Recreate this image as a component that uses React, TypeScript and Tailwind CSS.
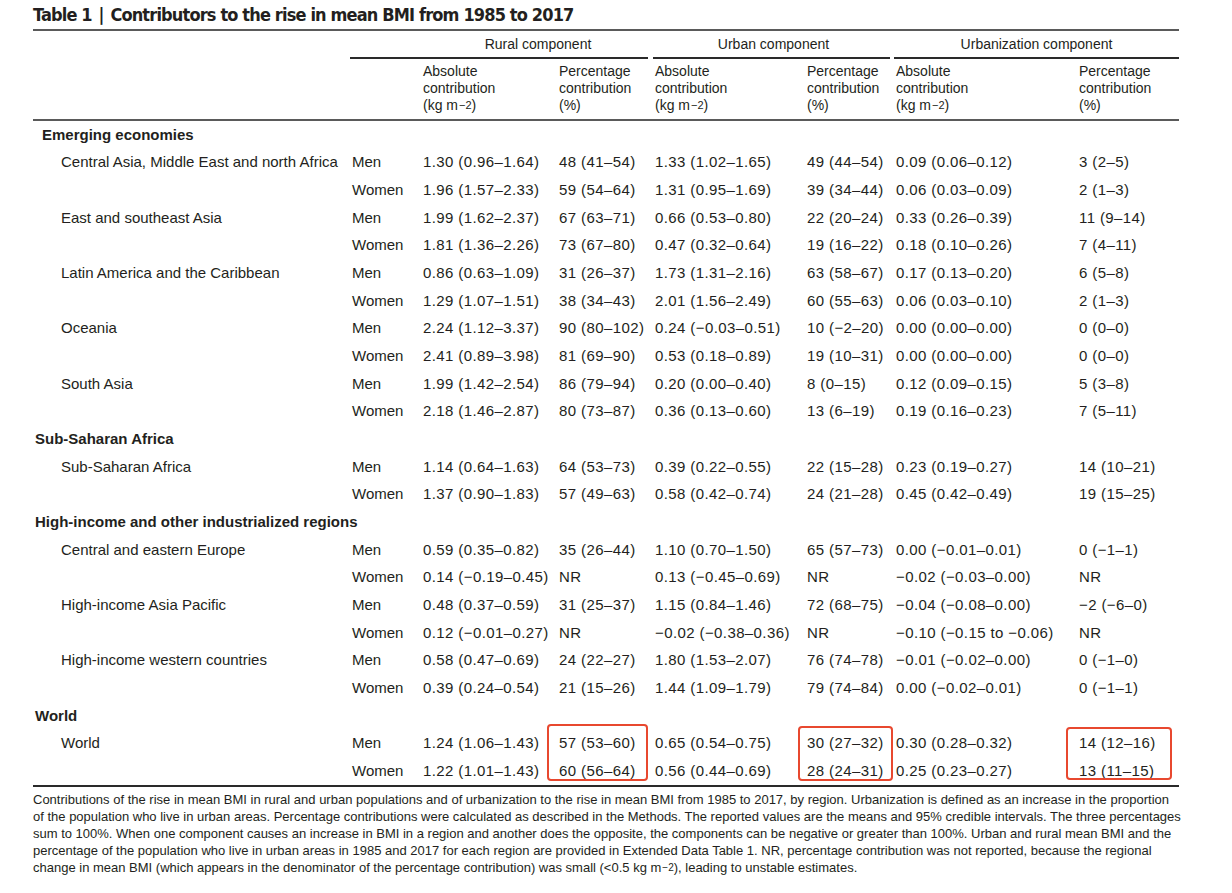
import React from 'react'

type Row = [string, string, string, string, string, string, string]

type Region = { name: string; rows: Row[] }

type Section = { title: string; indent: string; regions: Region[] }

const sections: Section[] = [
  {
    title: 'Emerging economies',
    indent: 'pl-[9px]',
    regions: [
      {
        name: 'Central Asia, Middle East and north Africa',
        rows: [
          ['Men', '1.30 (0.96–1.64)', '48 (41–54)', '1.33 (1.02–1.65)', '49 (44–54)', '0.09 (0.06–0.12)', '3 (2–5)'],
          ['Women', '1.96 (1.57–2.33)', '59 (54–64)', '1.31 (0.95–1.69)', '39 (34–44)', '0.06 (0.03–0.09)', '2 (1–3)'],
        ],
      },
      {
        name: 'East and southeast Asia',
        rows: [
          ['Men', '1.99 (1.62–2.37)', '67 (63–71)', '0.66 (0.53–0.80)', '22 (20–24)', '0.33 (0.26–0.39)', '11 (9–14)'],
          ['Women', '1.81 (1.36–2.26)', '73 (67–80)', '0.47 (0.32–0.64)', '19 (16–22)', '0.18 (0.10–0.26)', '7 (4–11)'],
        ],
      },
      {
        name: 'Latin America and the Caribbean',
        rows: [
          ['Men', '0.86 (0.63–1.09)', '31 (26–37)', '1.73 (1.31–2.16)', '63 (58–67)', '0.17 (0.13–0.20)', '6 (5–8)'],
          ['Women', '1.29 (1.07–1.51)', '38 (34–43)', '2.01 (1.56–2.49)', '60 (55–63)', '0.06 (0.03–0.10)', '2 (1–3)'],
        ],
      },
      {
        name: 'Oceania',
        rows: [
          ['Men', '2.24 (1.12–3.37)', '90 (80–102)', '0.24 (−0.03–0.51)', '10 (−2–20)', '0.00 (0.00–0.00)', '0 (0–0)'],
          ['Women', '2.41 (0.89–3.98)', '81 (69–90)', '0.53 (0.18–0.89)', '19 (10–31)', '0.00 (0.00–0.00)', '0 (0–0)'],
        ],
      },
      {
        name: 'South Asia',
        rows: [
          ['Men', '1.99 (1.42–2.54)', '86 (79–94)', '0.20 (0.00–0.40)', '8 (0–15)', '0.12 (0.09–0.15)', '5 (3–8)'],
          ['Women', '2.18 (1.46–2.87)', '80 (73–87)', '0.36 (0.13–0.60)', '13 (6–19)', '0.19 (0.16–0.23)', '7 (5–11)'],
        ],
      },
    ],
  },
  {
    title: 'Sub-Saharan Africa',
    indent: 'pl-[2px]',
    regions: [
      {
        name: 'Sub-Saharan Africa',
        rows: [
          ['Men', '1.14 (0.64–1.63)', '64 (53–73)', '0.39 (0.22–0.55)', '22 (15–28)', '0.23 (0.19–0.27)', '14 (10–21)'],
          ['Women', '1.37 (0.90–1.83)', '57 (49–63)', '0.58 (0.42–0.74)', '24 (21–28)', '0.45 (0.42–0.49)', '19 (15–25)'],
        ],
      },
    ],
  },
  {
    title: 'High-income and other industrialized regions',
    indent: 'pl-[2px]',
    regions: [
      {
        name: 'Central and eastern Europe',
        rows: [
          ['Men', '0.59 (0.35–0.82)', '35 (26–44)', '1.10 (0.70–1.50)', '65 (57–73)', '0.00 (−0.01–0.01)', '0 (−1–1)'],
          ['Women', '0.14 (−0.19–0.45)', 'NR', '0.13 (−0.45–0.69)', 'NR', '−0.02 (−0.03–0.00)', 'NR'],
        ],
      },
      {
        name: 'High-income Asia Pacific',
        rows: [
          ['Men', '0.48 (0.37–0.59)', '31 (25–37)', '1.15 (0.84–1.46)', '72 (68–75)', '−0.04 (−0.08–0.00)', '−2 (−6–0)'],
          ['Women', '0.12 (−0.01–0.27)', 'NR', '−0.02 (−0.38–0.36)', 'NR', '−0.10 (−0.15 to −0.06)', 'NR'],
        ],
      },
      {
        name: 'High-income western countries',
        rows: [
          ['Men', '0.58 (0.47–0.69)', '24 (22–27)', '1.80 (1.53–2.07)', '76 (74–78)', '−0.01 (−0.02–0.00)', '0 (−1–0)'],
          ['Women', '0.39 (0.24–0.54)', '21 (15–26)', '1.44 (1.09–1.79)', '79 (74–84)', '0.00 (−0.02–0.01)', '0 (−1–1)'],
        ],
      },
    ],
  },
  {
    title: 'World',
    indent: 'pl-[2px]',
    regions: [
      {
        name: 'World',
        rows: [
          ['Men', '1.24 (1.06–1.43)', '57 (53–60)', '0.65 (0.54–0.75)', '30 (27–32)', '0.30 (0.28–0.32)', '14 (12–16)'],
          ['Women', '1.22 (1.01–1.43)', '60 (56–64)', '0.56 (0.44–0.69)', '28 (24–31)', '0.25 (0.23–0.27)', '13 (11–15)'],
        ],
      },
    ],
  },
]

const cols = 'grid grid-cols-[317px_71px_136px_96px_152px_89px_183px_102px]'

function UnitHeader() {
  return (
    <>
      Absolute
      <br />
      contribution
      <br />
      (kg m<sup className="text-[11px] relative -top-[1px] ml-[1px]">−2</sup>)
    </>
  )
}

function PctHeader() {
  return (
    <>
      Percentage
      <br />
      contribution
      <br />
      (%)
    </>
  )
}

export default function App() {
  return (
    <div
      className="relative w-[1232px] h-[893px] bg-white text-[#231f20]"
      style={{ fontFamily: '"Liberation Sans", Arial, sans-serif' }}
    >
      <div className="ml-[33px] w-[1146px]">
        {/* Title */}
        <h1
          className="pt-[5px] h-[29px] text-[18px] leading-[20px] font-bold whitespace-nowrap tracking-[-0.85px]"
          style={{ fontFamily: '"Liberation Sans Narrow", "DejaVu Sans Condensed", "Liberation Sans", sans-serif' }}
        >
          Table 1 <span className="mx-[2px]">|</span> Contributors to the rise in mean BMI from 1985 to 2017
        </h1>
        <div className="h-[2px] bg-[#5a5a5a]" />

        {/* Group headers */}
        <div className="flex h-[28px] text-[14px]">
          <div className="w-[317px]" />
          <div className="w-[303px] flex flex-col">
            <div className="flex-1 flex items-center justify-center pl-[73px] pt-[1px]">Rural component</div>
            <div className="h-[2px] bg-[#2a2a2a] mr-[5px]" />
          </div>
          <div className="w-[241px] flex flex-col">
            <div className="flex-1 flex items-center justify-center pt-[1px]">Urban component</div>
            <div className="h-[2px] bg-[#2a2a2a] mr-[4px]" />
          </div>
          <div className="w-[285px] flex flex-col">
            <div className="flex-1 flex items-center justify-center pt-[1px]">Urbanization component</div>
            <div className="h-[2px] bg-[#2a2a2a]" />
          </div>
        </div>

        {/* Sub headers */}
        <div className={`${cols} h-[60px] pt-[4px] text-[14px] leading-[17px]`}>
          <div />
          <div />
          <div className="pl-[2px]"><UnitHeader /></div>
          <div className="pl-[2px]"><PctHeader /></div>
          <div className="pl-[2px]"><UnitHeader /></div>
          <div className="pl-[2px]"><PctHeader /></div>
          <div className="pl-[2px]"><UnitHeader /></div>
          <div className="pl-[2px]"><PctHeader /></div>
        </div>
        <div className="h-[2px] bg-[#5a5a5a]" />

        {/* Body */}
        <div className="text-[15px]">
          {sections.map((s) => (
            <div key={s.title}>
              <div className={`h-[27.68px] flex items-center font-bold ${s.indent}`}>{s.title}</div>
              {s.regions.map((r) =>
                r.rows.map((row, i) => (
                  <div key={r.name + row[0]} className={`${cols} h-[27.68px] items-center whitespace-nowrap`}>
                    <div className="pl-[28px]">{i === 0 ? r.name : ''}</div>
                    {row.map((cell, j) => (
                      <div key={j} className={j === 0 ? 'pl-[2px]' : 'pl-[2px] tracking-[0.4px]'}>
                        {cell}
                      </div>
                    ))}
                  </div>
                ))
              )}
            </div>
          ))}
        </div>
        <div className="h-[1.5px] bg-[#2a2a2a]" />

        {/* Footnote */}
        <p className="pt-[4px] text-[13px] leading-[17px] whitespace-nowrap">
          Contributions of the rise in mean BMI in rural and urban populations and of urbanization to the rise in mean BMI from 1985 to 2017, by region. Urbanization is defined as an increase in the proportion
          <br />
          of the population who live in urban areas. Percentage contributions were calculated as described in the Methods. The reported values are the means and 95% credible intervals. The three percentages
          <br />
          sum to 100%. When one component causes an increase in BMI in a region and another does the opposite, the components can be negative or greater than 100%. Urban and rural mean BMI and the
          <br />
          percentage of the population who live in urban areas in 1985 and 2017 for each region are provided in Extended Data Table 1. NR, percentage contribution was not reported, because the regional
          <br />
          change in mean BMI (which appears in the denominator of the percentage contribution) was small (&lt;0.5 kg m<sup className="text-[10px] relative -top-[1px] ml-[1px]">−2</sup>), leading to unstable estimates.
        </p>
      </div>

      {/* Highlight boxes */}
      <div className="absolute left-[547px] top-[724px] w-[101px] h-[57px] border-2 border-[#e8482f] rounded-[4px]" />
      <div className="absolute left-[798px] top-[726px] w-[95px] h-[55px] border-2 border-[#e8482f] rounded-[4px]" />
      <div className="absolute left-[1066px] top-[727px] w-[106px] h-[53px] border-2 border-[#e8482f] rounded-[4px]" />
    </div>
  )
}
